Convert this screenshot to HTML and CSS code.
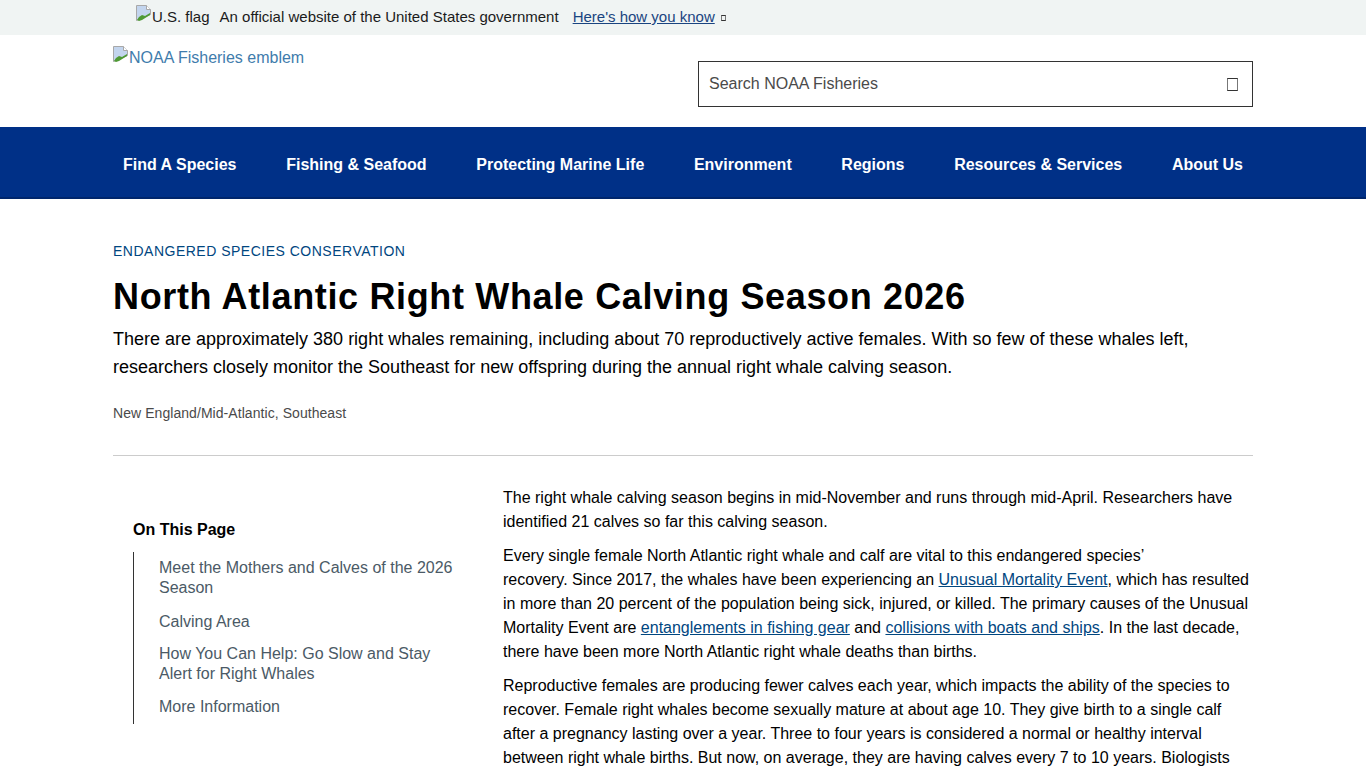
FILE: index.html
```html
<!DOCTYPE html>
<html lang="en">
<head>
    <meta charset="UTF-8">
    <title>North Atlantic Right Whale Calving Season 2026</title>
    <link rel="stylesheet" href="styles.css">
</head>
<body>
    <div class="gov-banner">
        <svg class="broken-img" viewBox="0 0 16 16"><path d="M.5.5h10l4 4v5l-14 6z" fill="#c3d5ee" stroke="#a8a8a8"/><path d="M10.5.5v4h4" fill="#fff" stroke="#a8a8a8"/><path d="M1 15l2-3 3-2 3 1 5-3v2l-8 5-3 1z" fill="#4f9a35"/></svg>
        <span class="flag-alt">U.S. flag</span>
        <span class="gov-text">An official website of the United States government</span>
        <a class="gov-link" href="#">Here's how you know</a>
        <span class="tofu small"></span>
    </div>

    <header class="site-header">
        <a class="emblem" href="#">
            <svg class="broken-img" viewBox="0 0 16 16"><path d="M.5.5h10l4 4v5l-14 6z" fill="#c3d5ee" stroke="#a8a8a8"/><path d="M10.5.5v4h4" fill="#fff" stroke="#a8a8a8"/><path d="M1 15l2-3 3-2 3 1 5-3v2l-8 5-3 1z" fill="#4f9a35"/></svg>NOAA Fisheries emblem
        </a>
        <div class="search-box">
            <span class="search-text">Search NOAA Fisheries</span>
            <span class="tofu"></span>
        </div>
    </header>

    <nav class="main-nav">
        <a href="#">Find A Species</a>
        <a href="#">Fishing &amp; Seafood</a>
        <a href="#">Protecting Marine Life</a>
        <a href="#">Environment</a>
        <a href="#">Regions</a>
        <a href="#">Resources &amp; Services</a>
        <a href="#">About Us</a>
    </nav>

    <main class="page">
        <div class="eyebrow">ENDANGERED SPECIES CONSERVATION</div>
        <h1>North Atlantic Right Whale Calving Season 2026</h1>
        <p class="lead">There are approximately 380 right whales remaining, including about 70 reproductively active females. With so few of these whales left, researchers closely monitor the Southeast for new offspring during the annual right whale calving season.</p>
        <div class="regions">New England/Mid-Atlantic, Southeast</div>
        <hr class="rule">

        <div class="columns">
            <aside class="toc">
                <h2>On This Page</h2>
                <ul>
                    <li>Meet the Mothers and Calves of the 2026 Season</li>
                    <li>Calving Area</li>
                    <li>How You Can Help: Go Slow and Stay Alert for Right Whales</li>
                    <li>More Information</li>
                </ul>
            </aside>
            <article class="body-text">
                <p>The right whale calving season begins in mid-November and runs through mid-April. Researchers have identified 21 calves so far this calving season.</p>
                <p>Every single female North Atlantic right whale and calf are vital to this endangered species’<br>recovery. Since 2017, the whales have been experiencing an <a href="#">Unusual Mortality Event</a>, which has resulted in more than 20 percent of the population being sick, injured, or killed. The primary causes of the Unusual Mortality Event are <a href="#">entanglements in fishing gear</a> and <a href="#">collisions with boats and ships</a>. In the last decade, there have been more North Atlantic right whale deaths than births.</p>
                <p>Reproductive females are producing fewer calves each year, which impacts the ability of the species to recover. Female right whales become sexually mature at about age 10. They give birth to a single calf after a pregnancy lasting over a year. Three to four years is considered a normal or healthy interval between right whale births. But now, on average, they are having calves every 7 to 10 years. Biologists</p>
            </article>
        </div>
    </main>
</body>
</html>
```

FILE: styles.css
```css
html {
    overflow: hidden;
    height: 768px;
}
body {
    margin: 0;
    height: 768px;
    overflow: hidden;
    font-family: "Liberation Sans", Arial, sans-serif;
    background-color: #fff;
    color: #000;
}
.broken-img {
    width: 16px;
    height: 16px;
    flex: none;
}

/* gov banner */
.gov-banner {
    height: 35px;
    box-sizing: border-box;
    background-color: #f0f4f3;
    display: flex;
    align-items: flex-start;
    padding: 5px 0 0 136px;
    font-size: 15px;
    line-height: 24px;
    color: #1b1b1b;
}
.flag-alt {
    margin-right: 10px;
}
.gov-text {
    margin-right: 14px;
}
.gov-link {
    color: #1a4480;
    margin-right: 6px;
}
.tofu {
    display: block;
    width: 11px;
    height: 13px;
    border: 1px solid #777;
    border-top-color: #333;
    border-bottom-color: #333;
    box-sizing: border-box;
}
.tofu.small {
    width: 5px;
    height: 6px;
    margin-top: 10px;
}

/* header */
.site-header {
    height: 92px;
    box-sizing: border-box;
    padding: 11px 113px 0;
    display: flex;
    justify-content: space-between;
    align-items: flex-start;
}
.emblem {
    display: flex;
    font-size: 16px;
    line-height: 24px;
    color: #3f7cac;
    text-decoration: none;
}
.search-box {
    width: 555px;
    height: 46px;
    box-sizing: border-box;
    margin-top: 15px;
    border: 1px solid #333;
    display: flex;
    align-items: center;
    justify-content: space-between;
    padding: 0 14px 0 10px;
    font-size: 16px;
    color: #4a4a4a;
}

/* nav */
.main-nav {
    height: 72px;
    box-sizing: border-box;
    padding: 6px 123px 0;
    background-color: #003087;
    border-bottom: 2px solid #00266c;
    display: flex;
    justify-content: space-between;
    align-items: center;
}
.main-nav a {
    color: #fff;
    font-size: 16px;
    font-weight: bold;
    text-decoration: none;
}

/* page */
.page {
    padding: 44px 113px 0;
}
.eyebrow {
    font-size: 14px;
    line-height: 16px;
    letter-spacing: 0.5px;
    color: #00467f;
}
h1 {
    margin: 16px 0 0;
    font-size: 36px;
    line-height: 44px;
    letter-spacing: 0.65px;
}
.lead {
    margin: 6px 0 0;
    font-size: 18px;
    line-height: 28px;
}
.regions {
    margin-top: 22px;
    font-size: 14px;
    line-height: 20px;
    letter-spacing: 0.06px;
    color: #4a4a4a;
}
.rule {
    margin: 32px 0 0;
    border: 0;
    border-top: 1px solid #ccc;
}
.columns {
    display: flex;
    margin-top: 30px;
}
.toc {
    width: 390px;
    flex: none;
    box-sizing: border-box;
    padding: 34px 0 0 20px;
}
.toc h2 {
    margin: 0;
    font-size: 16px;
    line-height: 20px;
    font-weight: bold;
}
.toc ul {
    list-style: none;
    margin: 12px 0 0;
    padding: 6px 0 7px 25px;
    border-left: 1px solid #333;
    font-size: 16px;
    line-height: 20px;
    color: #4b5a66;
}
.toc li {
    margin-bottom: 14px;
    width: 300px;
}
.toc li:nth-child(2) {
    margin-bottom: 12px;
}
.toc li:nth-child(3) {
    margin-bottom: 13px;
}
.toc li:last-child {
    margin-bottom: 0;
}
.body-text {
    flex: 1;
    font-size: 16px;
    line-height: 24px;
}
.body-text p {
    margin: 0 0 10px;
}
.body-text a {
    color: #00467f;
}
```
